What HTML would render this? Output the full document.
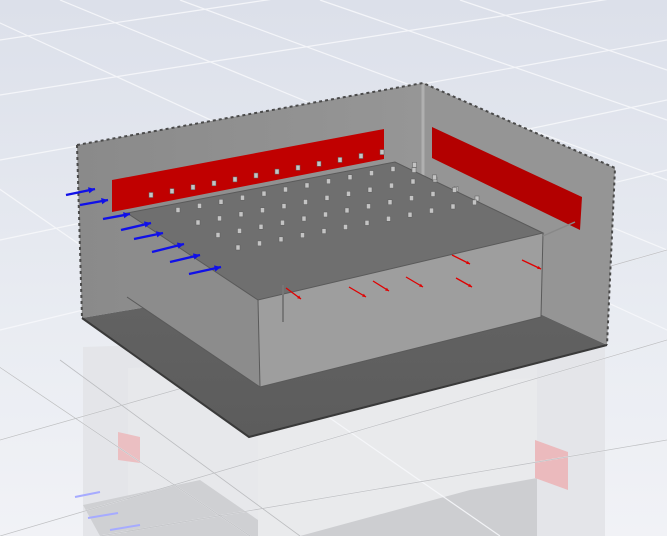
<!DOCTYPE html>
<html><head><style>
html,body{margin:0;padding:0;width:667px;height:536px;overflow:hidden;background:#e6e9ef;}
svg{display:block}
</style></head><body>
<svg id="s" width="667" height="536" viewBox="0 0 667 536" xmlns="http://www.w3.org/2000/svg">
<defs>
<linearGradient id="bg" x1="0" y1="0" x2="0" y2="1">
<stop offset="0" stop-color="#dce0ea"/><stop offset="0.6" stop-color="#e9ecf2"/><stop offset="1" stop-color="#f1f2f6"/>
</linearGradient>
<linearGradient id="wl" x1="0" y1="0" x2="1" y2="0">
<stop offset="0" stop-color="#8a8a8a"/><stop offset="1" stop-color="#969696"/>
</linearGradient>
<linearGradient id="fl" x1="0" y1="0" x2="0" y2="1">
<stop offset="0" stop-color="#646464"/><stop offset="1" stop-color="#5c5c5c"/>
</linearGradient>
</defs>
<rect width="667" height="536" fill="url(#bg)"/>
<!-- reflection -->
<polygon points="83,347 605,330 605,536 83,536" fill="#e4e5e9"/>
<polygon points="128,368 537,352 537,536 128,536" fill="#e7e8eb"/>
<polygon points="258,390 537,378 537,536 258,536" fill="#e9eaec"/>
<polygon points="83,505 200,480 258,520 258,536 100,536" fill="#cfd0d3"/>
<polygon points="300,536 470,490 537,478 537,536" fill="#cdced1"/>
<polygon points="118,432 140,437 140,463 118,460" fill="#ebbfc2"/>
<polygon points="535,440 568,452 568,490 535,478" fill="#ebbabd"/>
<g stroke="#f7f8fb" stroke-width="1.2" fill="none" opacity="0.9">
<path d="M0,40 L667,-60 M0,95 L667,-10 M0,160 L667,40 M0,240 L667,100 M0,330 L667,170 M0,440 L667,250 M0,536 L667,340 M100,536 L667,440"/>
<path d="M-50,0 L667,330 M60,0 L667,250 M180,0 L667,180 M320,0 L667,120 M460,0 L667,70 M-100,120 L500,536 M-100,300 L250,536"/>
</g>
<g stroke="#a8a9ad" stroke-width="0.8" fill="none" opacity="0.7">
<path d="M0,440 L667,250 M0,536 L667,340 M-100,300 L250,536 M100,536 L667,440 M60,360 L300,536"/>
</g>
<g stroke="#a6abff" stroke-width="2"><path d="M75,497 L100,492 M88,518 L118,513 M110,530 L140,525"/></g>
<!-- walls -->
<polygon points="77,145 423,83 423,260 82,318" fill="url(#wl)"/>
<polygon points="423,83 615,168 607,345 423,260" fill="#959595"/>
<line x1="423" y1="83" x2="423" y2="260" stroke="#b0b0b0" stroke-width="3"/>
<g stroke="#4a4a4a" stroke-width="2" fill="none" stroke-dasharray="3 3">
<path d="M77,145 L423,83 L615,168 L607,345 M77,145 L82,318"/>
</g>
<!-- red panels -->
<polygon points="112,180 384,129 384,159 112,212" fill="#c00000"/>
<polygon points="432,127 582,197 580,230 432,158" fill="#b30000"/>
<!-- floor -->
<polygon points="82,318 423,260 607,345 249,437" fill="url(#fl)"/>
<path d="M82,318 L249,437 L607,345" stroke="#3a3a3a" stroke-width="2" fill="none"/>
<!-- inner box -->
<polygon points="127,213 395,162 543,233 258,300" fill="#6f6f6f"/>
<polygon points="127,213 258,300 260,387 127,297" fill="#8c8c8c"/>
<polygon points="258,300 543,233 541,317 260,387" fill="#9e9e9e"/>
<path d="M127,213 L395,162 L543,233 L258,300 Z M258,300 L260,387 M127,297 L260,387 L541,317 L543,233" stroke="#5a5a5a" stroke-width="1" fill="none"/>
<line x1="543" y1="236" x2="575" y2="222" stroke="#888" stroke-width="1.5"/>
<line x1="283" y1="285" x2="283" y2="322" stroke="#777" stroke-width="2"/>
<g id="pegs"></g>
<g id="arr"></g>
</svg>
<script>
var ns="http://www.w3.org/2000/svg",P=document.getElementById('pegs'),A=document.getElementById('arr');
function peg(x,y){var r=document.createElementNS(ns,'rect');r.setAttribute('x',x-2);r.setAttribute('y',y-2.5);r.setAttribute('width',4);r.setAttribute('height',5);r.setAttribute('fill','#c4c4c4');r.setAttribute('stroke','#5e5e5e');r.setAttribute('stroke-width','0.5');P.appendChild(r);}
for(var i=0;i<12;i++)peg(151+i*21,195-i*3.9);
for(var i=0;i<4;i++)peg(414+i*21,170+i*9.5);
for(var r=0;r<4;r++)for(var c=0;c<12;c++){var x=178+c*21.5+r*20,y=210-c*4.1+r*12.5;if(x<530)peg(x,y);}
function ar(x1,y1,x2,y2,col,w){var l=document.createElementNS(ns,'line');l.setAttribute('x1',x1);l.setAttribute('y1',y1);l.setAttribute('x2',x2);l.setAttribute('y2',y2);l.setAttribute('stroke',col);l.setAttribute('stroke-width',w);A.appendChild(l);
var a=Math.atan2(y2-y1,x2-x1),s=w*3;var p=document.createElementNS(ns,'polygon');
p.setAttribute('points',x2+','+y2+' '+(x2-s*Math.cos(a-0.45))+','+(y2-s*Math.sin(a-0.45))+' '+(x2-s*Math.cos(a+0.45))+','+(y2-s*Math.sin(a+0.45)));p.setAttribute('fill',col);A.appendChild(p);}
[[66,195,95,189],[80,205,108,200],[103,219,130,214],[121,230,151,223],[134,239,163,233],[152,252,184,244],[170,262,200,255],[189,274,221,267]].forEach(function(a){ar(a[0],a[1],a[2],a[3],'#1010e8',2.4)});
[[286,288,301,299],[349,287,366,297],[373,281,389,291],[406,277,423,287],[456,278,472,287],[452,255,470,264],[522,260,541,269]].forEach(function(a){ar(a[0],a[1],a[2],a[3],'#e00000',1.3)});
</script>
</body></html>
